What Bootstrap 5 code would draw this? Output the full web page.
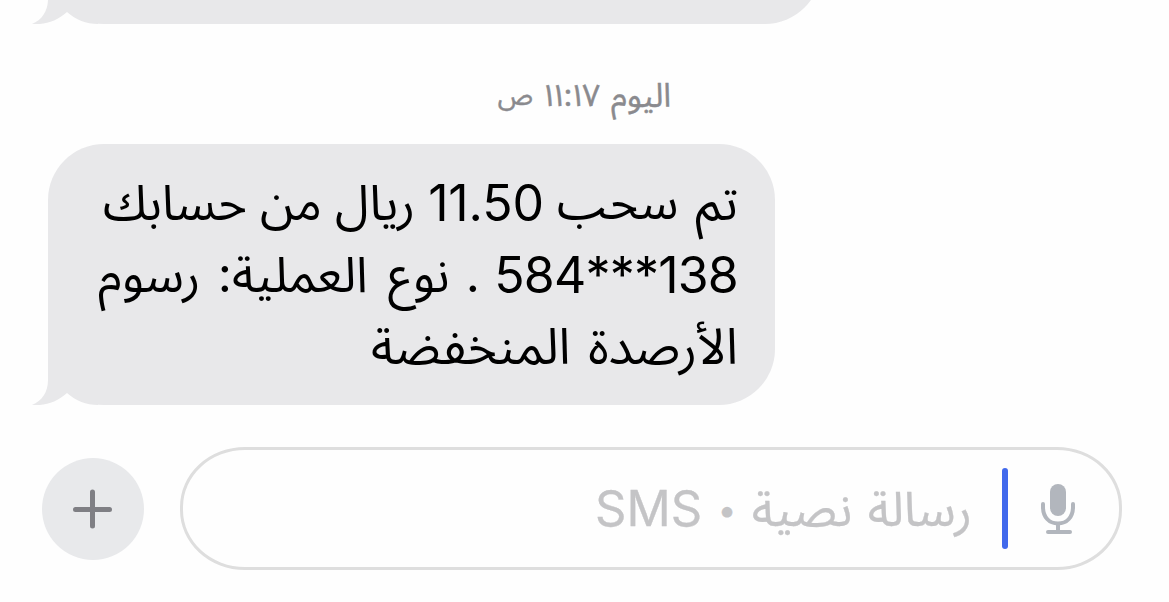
<!DOCTYPE html>
<html lang="ar">
<head>
<meta charset="utf-8">
<meta name="viewport" content="width=device-width, initial-scale=1">
<title>الرسائل</title>
<link href="https://cdn.jsdelivr.net/npm/bootstrap@5.3.0/dist/css/bootstrap.min.css" rel="stylesheet">
<style>
  body { font-family: Inter, "Noto Sans Arabic", "DejaVu Sans", sans-serif; color: #000; background: #fefefe; }
  .thread { height: 602px; }
  .bubble { background: #e8e8ea; margin-left: 48px; border-radius: 56px; }
  .bubble-prev { width: 773px; height: 124px; margin-top: -100px; flex: none; }
  .bubble-main { width: 727px; height: 261px; padding: 22px 37px 0 0; font-size: 49.3px; line-height: 72px; flex: none; }
  .tail { left: -16px; bottom: 0; }
  .line-1 { width: 635px; }
  .line-2 { width: 640px; }
  .line-3 { width: 367px; font-size: 50px; }
  .amount, .account { font-size: 50px; padding-top: 1px; height: 72px; }
  .account { letter-spacing: -.8px; }
  .verb { font-size: 48.3px; margin-right: 4px; }
  .amount { letter-spacing: -.1px; }
  .after-dot { margin-left: 2px; }
  .after-kind { margin-left: 6px; }
  .after-label { margin-left: 3px; }
  .stamp { height: 120px; padding-top: 47px; font-size: 33px; line-height: 48px; color: #8a8a8e; gap: 11px; flex: none; -webkit-text-stroke: .4px #8a8a8e; }
  .stamp-time { font-size: 31px; }
  .stamp-time .thin { margin: 0 -4px; }
  .stamp-half { font-size: 27px; }
  .composer { height: 123px; margin: 42px 47px 0 42px; flex: none; }
  .btn-plus { width: 102px; height: 102px; background: #e8e9eb; }
  .field { width: 942px; height: 123px; border: 3px solid #dedede; border-radius: 65px / 60px; font-size: 48.3px; color: #c4c4c6; padding-right: 42px; }
  .caret { width: 6px; height: 81px; background: #4169ec; border-radius: 3px; margin: 0 31px 0 30px; }
  .hint { width: 377px; line-height: 72px; -webkit-text-stroke: .3px #c4c4c6; }
  .sms { font-size: 49px; }
  .dot { font-size: 33px; top: 1px; }
</style>
</head>
<body class="overflow-hidden">
<main class="thread d-flex flex-column overflow-hidden">
  <div class="bubble bubble-prev position-relative">
    <svg class="tail position-absolute" width="66" height="60" viewBox="0 0 66 60"><path fill="#fefefe" d="M0 0H66V60H0Z"/><path fill="#e8e8ea" d="M16 0V35C16 47 10 56 0 60C13 61 25 57 35 48C44 56 54 60 66 60V0Z"/></svg>
  </div>
  <div class="stamp d-flex justify-content-center" dir="rtl"><span>اليوم</span><span class="stamp-time d-flex" dir="ltr"><span class="thin">١</span><span class="thin">١</span><span>:</span><span class="thin">١</span><span>٧</span></span><span class="stamp-half">ص</span></div>
  <div class="bubble bubble-main position-relative" dir="rtl">
    <div class="line-1 d-flex justify-content-between text-nowrap"><span>تم</span> <span class="verb">سحب</span> <span class="amount">11.50</span> <span>ريال</span> <span>من</span> <span>حسابك</span></div>
    <div class="line-2 d-flex justify-content-between text-nowrap"><span class="account">138***584</span> <span class="after-dot">.</span> <span class="after-kind">نوع</span> <span class="after-label">العملية:</span> <span>رسوم</span></div>
    <div class="line-3 d-flex justify-content-between text-nowrap"><span>الأرصدة</span> <span>المنخفضة</span></div>
    <svg class="tail position-absolute" width="66" height="60" viewBox="0 0 66 60"><path fill="#fefefe" d="M0 0H66V60H0Z"/><path fill="#e8e8ea" d="M16 0V35C16 47 10 56 0 60C13 61 25 57 35 48C44 56 54 60 66 60V0Z"/></svg>
  </div>
  <div class="composer d-flex align-items-center justify-content-between">
    <button class="btn btn-plus rounded-circle border-0 p-0 d-flex align-items-center justify-content-center" aria-label="إضافة">
      <svg width="40" height="40" viewBox="0 0 40 40"><path d="M19.500 3V37M2.500 20.500H36.500" stroke="#7f7f84" stroke-width="5" stroke-linecap="round"/></svg>
    </button>
    <div class="field d-flex align-items-center" dir="rtl">
      <svg width="38" height="52" viewBox="0 0 38 52" fill="none" stroke="#b2b6bd" stroke-width="4" stroke-linecap="round"><rect x="11" y="1" width="16" height="32" rx="8" fill="#b2b6bd" stroke="none"/><path d="M4 21V24C4 34 10 40.500 19 40.500S34 34 34 24V21M19 41V49M9 49H31"/></svg>
      <span class="caret"></span>
      <div class="hint d-flex justify-content-between text-nowrap"><span>رسالة</span> <span>نصية</span> <span class="dot position-relative">•</span> <span class="sms">SMS</span></div>
    </div>
  </div>
</main>
<script src="https://cdn.jsdelivr.net/npm/bootstrap@5.3.0/dist/js/bootstrap.bundle.min.js"></script>
</body>
</html>
